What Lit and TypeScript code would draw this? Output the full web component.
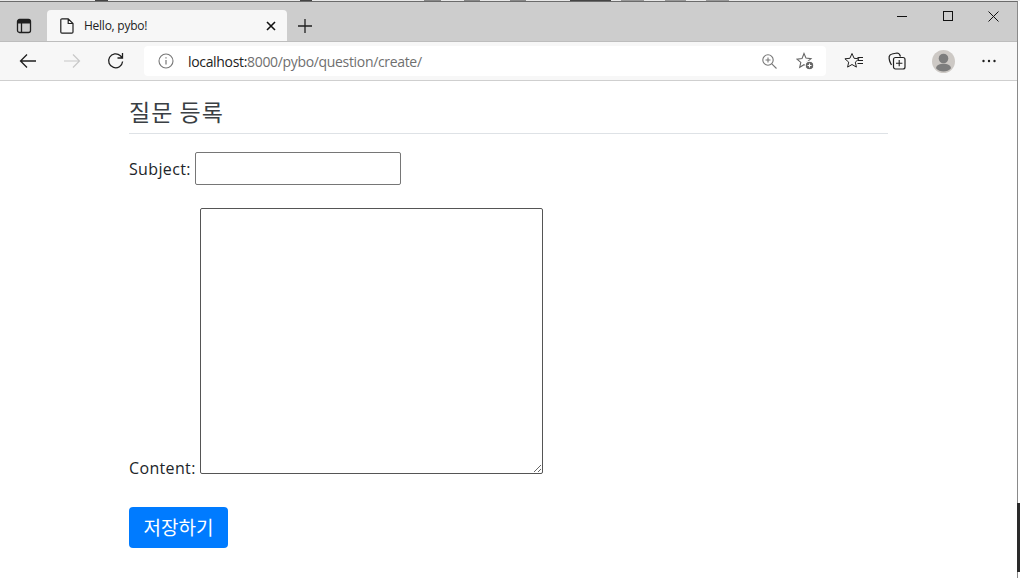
import { LitElement, html, css, svg } from "lit";
import { customElement } from "lit/decorators.js";

const ic = (w: number, h: number, body: unknown, cls = "") =>
  html`<svg class=${cls} width=${w} height=${h} viewBox="0 0 ${w} ${h}" fill="none" stroke="#1f1f1f" stroke-width="1.1">${body}</svg>`;

@customElement("app-root")
export class AppRoot extends LitElement {
  static styles = css`
    :host { display: block; width: 1020px; height: 578px; overflow: hidden; background: #fff; position: relative; font-family: "Open Sans", "Noto Sans", sans-serif; }
    * { box-sizing: border-box; }
    .desk { height: 1px; background: linear-gradient(90deg, #e8e8e8 0 95px, #444 95px 108px, #e8e8e8 108px 300px, #444 300px 312px, #e8e8e8 312px 424px, #888 424px 441px, #e8e8e8 441px 464px, #888 464px 480px, #e8e8e8 480px 510px, #888 510px 526px, #e8e8e8 526px 570px, #444 570px 611px, #e8e8e8 611px 621px, #999 621px 644px, #e8e8e8 644px 665px, #999 665px 686px, #e8e8e8 686px 706px, #999 706px 729px, #e8e8e8 729px); }
    .win { height: 577px; margin-right: 2px; border-top: 1px solid #6b6b6b; border-right: 1px solid #8a8a8a; display: flex; flex-direction: column; }
    .tabs { height: 39px; background: #cdcdcd; display: flex; align-items: flex-start; flex: none; }
    .tabtoggle { width: 47px; height: 39px; display: flex; align-items: center; justify-content: center; padding-top: 8px; }
    .tab { width: 240px; height: 31px; margin-top: 8px; background: #f7f7f7; border-radius: 4px 4px 0 0; display: flex; align-items: center; padding: 0 11px 0 13px; font: 12px "Open Sans", sans-serif; color: #222; }
    .tab .title { margin-left: 10px; flex: 1; letter-spacing: -.25px; }
    .plus { width: 36px; height: 39px; display: flex; align-items: center; justify-content: center; padding-top: 8px; }
    .spacer { flex: 1; }
    .wbtns { display: flex; margin-right: 1px; }
    .wbtn { width: 45.500px; height: 28px; display: flex; align-items: center; justify-content: center; }
    .bar { height: 40px; background: #f7f7f7; border-bottom: 1px solid #cfcfcf; display: flex; align-items: center; flex: none; border-top: 1px solid #bdbdbd; }
    .nav { width: 44px; height: 30px; display: flex; align-items: center; justify-content: center; flex: none; }
    .first { margin-left: 6px; }
    .url { width: 682px; height: 30px; margin-left: 6px; background: #fff; border-radius: 4px; display: flex; align-items: center; padding: 0 12px 0 14px; font: 14px "Open Sans", sans-serif; letter-spacing: -.33px; color: #6f6f6f; flex: none; }
    .url b { font-weight: 400; color: #222; }
    .url .addr { margin-left: 14px; flex: 1; white-space: nowrap; }
    .url .zoom { margin-right: 19px; display: flex; }
    .tools { display: flex; margin-left: 5px; align-items: center; }
    .tool { width: 45px; height: 30px; display: flex; align-items: center; justify-content: center; }
    .tool.coll { padding-right: 3px; }
    .page { flex: 1; background: #fff; color: #212529; font-family: "Open Sans", "Noto Sans CJK KR", sans-serif; font-size: 16px; padding: 0 130px 0 129px; }
    h5 { margin: 0; height: 53px; padding-top: 16px; border-bottom: 1px solid #dee2e6; font: 400 23px/28px "Noto Sans CJK KR", sans-serif; color: #3a3f44; width: 759px; letter-spacing: 1px; }
    .subject { display: flex; align-items: center; gap: 4px; margin-top: 18px; height: 33px; }
    label { letter-spacing: .35px; }
    .field { width: 206px; height: 33px; border: 1px solid #767676; border-radius: 2px; background: #fff; display: block; padding: 0; }
    .content { display: flex; align-items: flex-end; gap: 4px; margin-top: 23px; }
    .content label { line-height: 18px; margin-bottom: -3px; }
    textarea { width: 343px; height: 266px; border: 1px solid #555; border-radius: 2px; background: #fff; display: block; padding: 2px; margin: 0; outline: none; }
    button { margin-top: 33px; display: block; width: 99px; height: 41px; background: #007bff; color: #fff; border: 0; border-radius: 4px; font: 400 19px "Noto Sans CJK KR", sans-serif; padding: 0 0 3px; }
    .edge { position: absolute; right: 0; top: 503px; width: 3px; height: 69px; background: #2a2a2a; }
  `;

  render() {
    return html`
      <div class="desk"></div>
      <div class="win">
        <div class="tabs">
          <div class="tabtoggle">${ic(16, 16, svg`<rect x="1.500" y="1.500" width="13" height="13" rx="2" stroke-width="1.300"/><path d="M5.500 5v9.500" stroke-width="1.300"/><path d="M2 2h12v3.500H2z" fill="#1f1f1f" stroke="none"/>`)}</div>
          <div class="tab">
            ${ic(14, 16, svg`<path d="M2 .8h6.200l4.800 4.700v8.500a1.200 1.200 0 0 1-1.200 1.200H2A1.200 1.200 0 0 1 .8 14V2A1.200 1.200 0 0 1 2 .8zM8.200 .8v4.700h4.800" stroke-width="1.200"/>`)}
            <span class="title">Hello, pybo!</span>
            ${ic(10, 10, svg`<path d="M1 1l8 8M9 1l-8 8" stroke-width="1.600" stroke="#111"/>`)}
          </div>
          <div class="plus">${ic(16, 16, svg`<path d="M8 1v14M1 8h14" stroke-width="1.300"/>`)}</div>
          <div class="spacer"></div>
          <div class="wbtns">
            <div class="wbtn">${ic(10, 10, svg`<path d="M0 5.500h10" stroke="#111" stroke-width="1"/>`)}</div>
            <div class="wbtn">${ic(10, 10, svg`<rect x=".5" y=".5" width="9" height="9" stroke="#111" stroke-width="1"/>`)}</div>
            <div class="wbtn">${ic(11, 11, svg`<path d="M.5.5l10 10M10.500.5l-10 10" stroke="#111" stroke-width="1"/>`)}</div>
          </div>
        </div>
        <div class="bar">
          <div class="nav first">${ic(18, 16, svg`<path d="M17 8H1.500M8 1.500L1.500 8L8 14.500" stroke-width="1.300"/>`)}</div>
          <div class="nav">${ic(18, 16, svg`<path d="M1 8h15.500M10 1.500L16.500 8L10 14.500" stroke="#c8c8c8" stroke-width="1.200"/>`)}</div>
          <div class="nav">${ic(18, 18, svg`<path d="M15.600 9.500a7 7 0 1 1-2.200-5.800L15.500 6M15.500 1v5h-5" stroke-width="1.300"/>`)}</div>
          <div class="url">
            ${ic(16, 16, svg`<circle cx="8" cy="8" r="7" stroke="#777"/><path d="M8 7v4.500M8 4.200v1.300" stroke="#777" stroke-width="1.200"/>`)}
            <span class="addr"><b>localhost:</b>8000/pybo/question/create/</span>
            <span class="zoom">${ic(15, 15, svg`<circle cx="6" cy="6" r="5.200" stroke="#777"/><path d="M9.800 9.800l4.700 4.700M6 3.500v5M3.500 6h5" stroke="#777"/>`)}</span>
            ${ic(18, 18, svg`<path d="M8 1.500l2 4.600 5 .5-3.800 3.300 1.100 4.900L8 12.700l-4.300 2.600 1.100-4.900L1 7.100l5-.5z" stroke="#666"/><circle cx="13.500" cy="13.500" r="4.300" fill="#666" stroke="#fff"/><path d="M13.500 11.500v4M11.500 13.500h4" stroke="#fff"/>`)}
          </div>
          <div class="tools">
            <div class="tool">${ic(20, 18, svg`<path d="M8 1.500l2.100 4.800 5 .5-3.800 3.300 1.100 5L8 12.500l-4.400 2.600 1.100-5L.9 6.800l5-.5z" stroke-width="1"/><path d="M13.500 5.500h5.500M14 8.500h5M13.500 11.500h5.500" stroke-width="1"/>`)}</div>
            <div class="tool coll">${ic(18, 18, svg`<path d="M3.500 13C1.800 10 .8 7 1.200 4.500Q1.700 2.300 4 2L9 1Q11.500 1 12.500 4.500" stroke-width="1.200"/><rect x="5.500" y="5.500" width="11.500" height="11.500" rx="2" stroke-width="1.200"/><path d="M11.200 8v6.200M8 11.200h6.400"/>`)}</div>
            <div class="tool"><svg width="23" height="23" viewBox="0 0 23 23"><circle cx="11.500" cy="11.500" r="11.500" fill="#cdc9c5"/><circle cx="11.500" cy="8.500" r="4.800" fill="#7d7d7d"/><path d="M4 18.200C4.500 14.800 8 13.800 11.500 13.800S18.500 14.800 19 18.200C17 20.500 14.500 21.500 11.500 21.500S6 20.500 4 18.200z" fill="#7d7d7d"/></svg></div>
            <div class="tool">${ic(16, 4, svg`<circle cx="2.500" cy="2" r="1.200" fill="#1f1f1f" stroke="none"/><circle cx="8" cy="2" r="1.200" fill="#1f1f1f" stroke="none"/><circle cx="13.500" cy="2" r="1.200" fill="#1f1f1f" stroke="none"/>`)}</div>
          </div>
        </div>
        <main class="page">
          <h5>질문 등록</h5>
          <div class="subject"><label>Subject:</label><input class="field" type="text" /></div>
          <div class="content"><label>Content:</label><textarea></textarea></div>
          <button>저장하기</button>
        </main>
      </div>
      <div class="edge"></div>
    `;
  }
}
